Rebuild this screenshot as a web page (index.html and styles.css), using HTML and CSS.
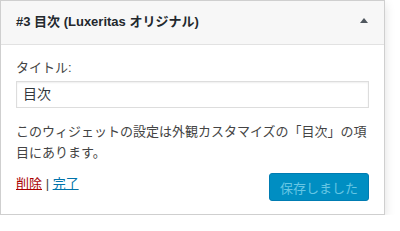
FILE: index.html
```html
<!DOCTYPE html>
<html lang="ja">
<head>
<meta charset="utf-8">
<link rel="stylesheet" href="styles.css">
</head>
<body>
<div class="widget">
  <div class="widget-top">
    <h3 class="widget-title">#3 目次 (Luxeritas オリジナル)</h3>
    <span class="toggle"></span>
  </div>
  <div class="widget-inside">
    <label class="field-label">タイトル:</label>
    <div class="input">目次</div>
    <p class="desc">このウィジェットの設定は外観カスタマイズの「目次」の項目にあります。</p>
    <div class="actions">
      <div class="links"><a class="delete">削除</a> | <a class="done">完了</a></div>
      <span class="button">保存しました</span>
    </div>
  </div>
</div>
</body>
</html>
```
FILE: styles.css
```css
html, body {
  margin: 0;
  padding: 0;
  background: #fff;
}
body {
  font-family: "Liberation Sans", "Noto Sans CJK JP", sans-serif;
  font-size: 13px;
  color: #444;
}
.widget {
  width: 383px;
  height: 213px;
  border: 1px solid #cfcfcf;
  background: #fff;
  box-shadow: 0 4px 10px rgba(0,0,0,0.13);
  display: flex;
  flex-direction: column;
}
.widget-top {
  height: 43px;
  background: #f7f7f7;
  border-bottom: 1px solid #e2e2e2;
  display: flex;
  align-items: center;
  justify-content: space-between;
  padding: 0 15px;
}
.widget-title {
  margin: 0;
  font-size: 13px;
  font-weight: 700;
  color: #23282d;
  line-height: 18px;
  padding-bottom: 2px;
}
.toggle {
  width: 0;
  height: 0;
  border-left: 4px solid transparent;
  border-right: 4px solid transparent;
  border-bottom: 5px solid #50575e;
  margin-right: 1px;
  margin-bottom: 4px;
}
.widget-inside {
  padding: 14px 15px 12px;
  display: flex;
  flex-direction: column;
}
.field-label {
  line-height: 18px;
  height: 18px;
}
.input {
  margin-top: 4px;
  height: 25px;
  border: 1px solid #ddd;
  box-shadow: inset 0 1px 2px rgba(0,0,0,0.07);
  padding: 0 6px;
  line-height: 25px;
  font-size: 14px;
  color: #32373c;
}
.desc {
  margin: 13px 0 0;
  line-height: 21px;
}
.actions {
  margin-top: 10px;
  display: flex;
  justify-content: space-between;
  align-items: flex-start;
}
.links {
  line-height: 21px;
}
.delete {
  color: #a00;
  text-decoration: underline;
}
.done {
  color: #0073aa;
  text-decoration: underline;
}
.button {
  width: 98px;
  height: 26px;
  border: 1px solid #007cb2;
  border-radius: 3px;
  background: #008ec2;
  color: #66c6e4;
  display: flex;
  align-items: center;
  justify-content: center;
  font-size: 13px;
}
```
